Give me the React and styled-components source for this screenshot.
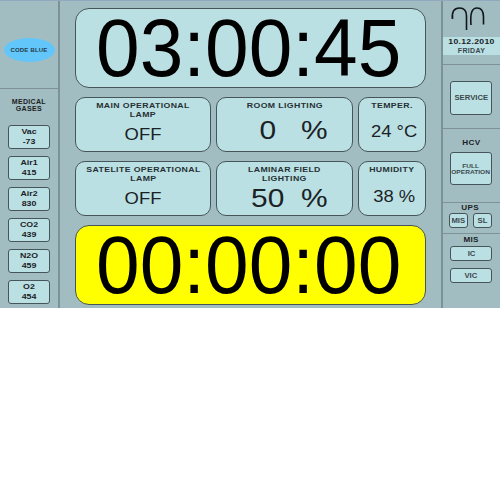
import React from 'react';
import styled, { createGlobalStyle } from 'styled-components';

const Global = createGlobalStyle`
  html, body { margin: 0; padding: 0; background: #fff; }
  body { font-family: "Liberation Sans", Arial, sans-serif; color: #1a2224; }
`;

const Screen = styled.div`
  width: 500px;
  height: 308px;
  display: grid;
  grid-template-columns: 60px 381px 59px;
  background: #a2bdc1;
  border-top: 1px solid #93a8bd;
  box-sizing: border-box;
`;

const Side = styled.div`
  display: flex;
  flex-direction: column;
  align-items: center;
  min-height: 0;
`;

const LeftSide = styled(Side)`
  border-right: 2px solid #7d9197;
`;

const RightSide = styled(Side)`
  border-left: 2px solid #7d9197;
`;

const Section = styled.div`
  width: 100%;
  height: ${p => p.$h}px;
  flex: none;
  display: flex;
  flex-direction: column;
  align-items: center;
  padding-top: ${p => p.$top || 0}px;
  padding-right: ${p => p.$right || 0}px;
  box-sizing: border-box;
  border-bottom: ${p => (p.$last ? 'none' : '1px solid #7d9197')};
`;

const CodeBlue = styled.div`
  width: 51px;
  height: 24px;
  border-radius: 50%;
  background: #62c6fa;
  color: #263a48;
  font-size: 6px;
  font-weight: bold;
  letter-spacing: 0.2px;
  display: flex;
  align-items: center;
  justify-content: center;
`;

const GroupTitle = styled.div`
  font-size: ${p => p.$size || 6.5}px;
  font-weight: bold;
  line-height: ${p => p.$line || 7}px;
  letter-spacing: 0.3px;
  text-align: center;
  transform: scaleX(1.08);
  margin-bottom: ${p => p.$below || 0}px;
`;

const GasList = styled.div`
  display: flex;
  flex-direction: column;
  gap: 7px;
`;

const GasButton = styled.div`
  width: 42px;
  height: 24px;
  box-sizing: border-box;
  border: 1px solid #465559;
  border-radius: 3px;
  background: #bbe0e4;
  font-size: 8px;
  font-weight: bold;
  line-height: 10.5px;
  text-align: center;
  display: flex;
  flex-direction: column;
  justify-content: center;
`;

const GasText = styled.span`
  display: block;
  transform: scaleX(1.1);
`;

const Center = styled.div`
  display: grid;
  grid-template-columns: 136px 137px 68px;
  grid-template-rows: 80px 55px 55px 80px;
  column-gap: 5px;
  row-gap: 9px;
  padding: 7px 0 0 15px;
  box-sizing: border-box;
`;

const Clock = styled.div`
  grid-column: 1 / -1;
  box-sizing: border-box;
  border: 1px solid #465559;
  border-radius: 14px;
  background: ${p => p.$bg || '#bbe0e4'};
  padding-right: 4px;
  display: flex;
  align-items: center;
  justify-content: center;
`;

const ClockText = styled.span`
  color: #000;
  font-size: 80px;
  line-height: 78px;
  transform: scale(0.98, 1.03);
`;

const Card = styled.div`
  box-sizing: border-box;
  border: 1px solid #465559;
  border-radius: 10px;
  background: #bbe0e4;
  padding-top: 4px;
  display: flex;
  flex-direction: column;
  align-items: center;
`;

const CardTitle = styled.div`
  font-size: 8px;
  font-weight: bold;
  line-height: 8.5px;
  letter-spacing: 0.35px;
  text-align: center;
  color: #263033;
  white-space: nowrap;
  transform: scaleX(1.09);
`;

const CardValue = styled.div`
  flex: 1;
  display: flex;
  align-items: center;
  justify-content: center;
  white-space: pre;
  padding: ${p => p.$pt || 0}px 0 ${p => p.$pb || 0}px ${p => p.$pl || 0}px;
`;

const ValueText = styled.span`
  font-size: ${p => p.$size || 16}px;
  color: #1a2224;
  transform: scaleX(1.15);
`;

const Logo = styled.svg`
  display: block;
  align-self: flex-start;
  margin: 5px 0 0 7px;
`;

const DateBand = styled.div`
  width: 100%;
  height: 18px;
  margin-top: 5px;
  background: #bbe0e4;
  text-align: center;
`;

const DateLine = styled.div`
  font-size: ${p => p.$size}px;
  font-weight: bold;
  line-height: ${p => p.$line}px;
  letter-spacing: 0.3px;
  color: ${p => p.$color || '#1a2224'};
  transform: scaleX(1.08);
`;

const Button = styled.div`
  width: ${p => p.$w || 42}px;
  height: ${p => p.$h}px;
  box-sizing: border-box;
  border: 1px solid #465559;
  border-radius: 3px;
  background: #bbe0e4;
  line-height: 6px;
  text-align: center;
  display: flex;
  align-items: center;
  justify-content: center;
  margin-top: ${p => p.$mt || 0}px;
`;

const ButtonText = styled.span`
  font-size: ${p => p.$size || 7}px;
  font-weight: bold;
  color: #3a484c;
  white-space: nowrap;
  transform: scaleX(1.1);
`;

const PairRow = styled.div`
  display: flex;
  gap: 5px;
`;

const gases = [
  ['Vac', '-73'],
  ['Air1', '415'],
  ['Air2', '830'],
  ['CO2', '439'],
  ['N2O', '459'],
  ['O2', '454'],
];

const App = () => (
  <>
    <Global />
    <Screen>
      <LeftSide>
        <Section $h={88} $top={37}>
          <CodeBlue>CODE BLUE</CodeBlue>
        </Section>
        <Section $h={219} $top={9} $last>
          <GroupTitle $below={13}>MEDICAL<br />GASES</GroupTitle>
          <GasList>
            {gases.map(([name, value]) => (
              <GasButton key={name}>
                <GasText>{name}</GasText>
                <GasText>{value}</GasText>
              </GasButton>
            ))}
          </GasList>
        </Section>
      </LeftSide>

      <Center>
        <Clock><ClockText>03:00:45</ClockText></Clock>
        <Card>
          <CardTitle>MAIN OPERATIONAL<br />LAMP</CardTitle>
          <CardValue><ValueText>OFF</ValueText></CardValue>
        </Card>
        <Card>
          <CardTitle>ROOM LIGHTING</CardTitle>
          <CardValue $pl={19}><ValueText $size={26}>{'0   %'}</ValueText></CardValue>
        </Card>
        <Card>
          <CardTitle>TEMPER.</CardTitle>
          <CardValue $pl={4} $pt={2}><ValueText>24 °C</ValueText></CardValue>
        </Card>
        <Card>
          <CardTitle>SATELITE OPERATIONAL<br />LAMP</CardTitle>
          <CardValue $pb={1}><ValueText>OFF</ValueText></CardValue>
        </Card>
        <Card>
          <CardTitle>LAMINAR FIELD<br />LIGHTING</CardTitle>
          <CardValue $pl={9} $pb={4}><ValueText $size={26}>{'50  %'}</ValueText></CardValue>
        </Card>
        <Card>
          <CardTitle>HUMIDITY</CardTitle>
          <CardValue $pl={4} $pt={4}><ValueText>38 %</ValueText></CardValue>
        </Card>
        <Clock $bg="#ffff00"><ClockText>00:00:00</ClockText></Clock>
      </Center>

      <RightSide>
        <Section $h={64}>
          <Logo width="36" height="26" viewBox="450 6 36 26">
            <path d="M452.5 19 C451.5 12 454 8 459.5 8 C464.5 8 466.5 11 466.5 16 L466.5 30" fill="none" stroke="#10161a" strokeWidth="1.6" />
            <path d="M471 25 C470 13 472 8 477 8 C481.5 8 483.5 12 483.5 17 L483.5 24.5" fill="none" stroke="#10161a" strokeWidth="1.6" />
          </Logo>
          <DateBand>
            <DateLine $size={8} $line={9.5}>10.12.2010</DateLine>
            <DateLine $size={6.5} $line={7.5} $color="#3a484c">FRIDAY</DateLine>
          </DateBand>
        </Section>
        <Section $h={64} $top={16} $right={1}>
          <Button $h={34}><ButtonText>SERVICE</ButtonText></Button>
        </Section>
        <Section $h={74} $top={10} $right={1}>
          <GroupTitle $size={7.5} $below={6}>HCV</GroupTitle>
          <Button $h={33}><ButtonText $size={6}>FULL<br />OPERATION</ButtonText></Button>
        </Section>
        <Section $h={31} $top={1} $right={2}>
          <GroupTitle $size={7.5} $below={2}>UPS</GroupTitle>
          <PairRow>
            <Button $w={19} $h={15}><ButtonText>MIS</ButtonText></Button>
            <Button $w={19} $h={15}><ButtonText>SL</ButtonText></Button>
          </PairRow>
        </Section>
        <Section $h={74} $top={2} $right={1} $last>
          <GroupTitle $size={7.5} $below={3}>MIS</GroupTitle>
          <Button $h={15}><ButtonText>IC</ButtonText></Button>
          <Button $h={15} $mt={7}><ButtonText>VIC</ButtonText></Button>
        </Section>
      </RightSide>
    </Screen>
  </>
);

export default App;
